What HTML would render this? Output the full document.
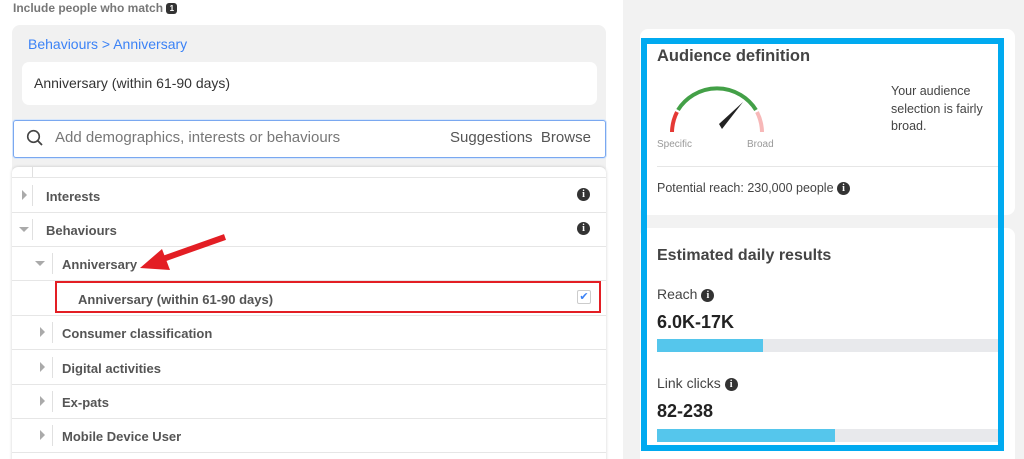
<!DOCTYPE html>
<html><head><style>
*{box-sizing:border-box;margin:0;padding:0}
html,body{width:1024px;height:459px;overflow:hidden}
body{background:#fff;font-family:"Liberation Sans",Arial,sans-serif;position:relative;color:#444}
.abs{position:absolute}
.info{display:inline-block;width:13px;height:13px;border-radius:50%;background:#333;color:#fff;font-size:10px;font-weight:bold;text-align:center;line-height:13px;font-family:"Liberation Serif",serif;vertical-align:middle}
.row{position:absolute;left:12px;width:594px;height:35px;border-bottom:1px solid #e6e6e6;font-size:13px;font-weight:bold;color:#555}
.row .t{position:absolute;top:11px}
.row .sep{position:absolute;top:7px;width:1px;height:21px;background:#e0e0e0}
.tri-r{position:absolute;top:12px;width:0;height:0;border-top:5px solid transparent;border-bottom:5px solid transparent;border-left:5px solid #aaa}
.tri-d{position:absolute;top:15px;width:0;height:0;border-left:5px solid transparent;border-right:5px solid transparent;border-top:5px solid #aaa}
</style></head><body>
<div class="abs" style="left:13px;top:1px;font-size:12px;font-weight:bold;color:#777">Include people who match <span class="info" style="border-radius:3px;width:11px;height:11px;line-height:11px;font-size:8px;font-family:'Liberation Sans'">1</span></div>
<div class="abs" style="left:12px;top:25px;width:594px;height:150px;background:#f1f1f1;border-radius:8px"></div>
<div class="abs" style="left:28px;top:36px;font-size:14px;color:#3b82f6">Behaviours &gt; Anniversary</div>
<div class="abs" style="left:22px;top:62px;width:575px;height:43px;background:#fff;border-radius:7px;font-size:14px;color:#333;padding:13px 12px">Anniversary (within 61-90 days)</div>
<div class="abs" style="left:13px;top:120px;width:593px;height:38px;background:#fff;border:1px solid #7aa8f0;border-radius:3px;box-shadow:0 0 0 1px #d6e6fb"></div>
<svg class="abs" style="left:26px;top:129px" width="18" height="18"><circle cx="7.5" cy="7.5" r="5.8" fill="none" stroke="#444" stroke-width="1.6"/><line x1="11.8" y1="11.8" x2="16" y2="16" stroke="#444" stroke-width="1.8"/></svg>
<div class="abs" style="left:55px;top:129px;font-size:15px;color:#777">Add demographics, interests or behaviours</div>
<div class="abs" style="left:450px;top:129px;font-size:15px;color:#555">Suggestions&nbsp;&nbsp;Browse</div>
<div class="abs" style="left:12px;top:167px;width:594px;height:300px;background:#fff;border-radius:6px;box-shadow:0 0 3px rgba(0,0,0,.18)"></div>
<div class="row" style="top:167px;height:11px"><div class="sep" style="left:20px;top:0;height:10px"></div></div>
<div class="row" style="top:178px"><div class="tri-r" style="left:10px"></div><div class="sep" style="left:20px"></div><div class="t" style="left:34px">Interests</div><span class="info" style="position:absolute;right:16px;top:10px">i</span></div>
<div class="row" style="top:212px"><div class="tri-d" style="left:7px"></div><div class="sep" style="left:20px"></div><div class="t" style="left:34px">Behaviours</div><span class="info" style="position:absolute;right:16px;top:10px">i</span></div>
<div class="row" style="top:246px"><div class="tri-d" style="left:23px"></div><div class="sep" style="left:40px"></div><div class="t" style="left:50px">Anniversary</div></div>
<div class="row" style="top:281px"><div class="t" style="left:66px">Anniversary (within 61-90 days)</div></div>
<div class="abs" style="left:55px;top:281px;width:546px;height:32px;border:2px solid #e31e24"></div>
<div class="abs" style="left:577px;top:290px;width:14px;height:14px;border:1px solid #ccc;border-radius:2px;color:#3b82f6;font-size:11px;line-height:12px;text-align:center">✔</div>
<div class="row" style="top:315px"><div class="tri-r" style="left:28px"></div><div class="sep" style="left:40px"></div><div class="t" style="left:50px">Consumer classification</div></div>
<div class="row" style="top:350px"><div class="tri-r" style="left:28px"></div><div class="sep" style="left:40px"></div><div class="t" style="left:50px">Digital activities</div></div>
<div class="row" style="top:384px"><div class="tri-r" style="left:28px"></div><div class="sep" style="left:40px"></div><div class="t" style="left:50px">Ex-pats</div></div>
<div class="row" style="top:418px"><div class="tri-r" style="left:28px"></div><div class="sep" style="left:40px"></div><div class="t" style="left:50px">Mobile Device User</div></div>
<svg class="abs" style="left:130px;top:230px" width="100" height="45"><line x1="95" y1="7" x2="30" y2="30" stroke="#e31e24" stroke-width="6"/><polygon points="10,38 32,19 40,40" fill="#e31e24"/></svg>

<div class="abs" style="left:623px;top:0;width:401px;height:459px;background:#f2f2f2"></div>
<div class="abs" style="left:640px;top:29px;width:375px;height:186px;background:#fff;border-radius:8px"></div>
<div class="abs" style="left:640px;top:228px;width:375px;height:240px;background:#fff;border-radius:8px"></div>
<div class="abs" style="left:641px;top:38px;width:363px;height:413px;border:6px solid #00aaf0"></div>
<div class="abs" style="left:657px;top:47px;font-size:16.5px;font-weight:bold;color:#444">Audience definition</div>
<svg class="abs" style="left:660px;top:80px" width="120" height="55">
<path d="M12 52 A46 46 0 0 1 17 32" fill="none" stroke="#e53935" stroke-width="4"/>
<path d="M18 30 A46 46 0 0 1 96 30" fill="none" stroke="#43a047" stroke-width="4"/>
<path d="M97 32 A46 46 0 0 1 102 52" fill="none" stroke="#f7b8b8" stroke-width="4"/>
<path d="M59 44 L83 22 L62 49 Z" fill="#222"/></svg>
<div class="abs" style="left:657px;top:139px;font-size:10px;color:#999">Specific</div>
<div class="abs" style="left:747px;top:139px;font-size:10px;color:#999">Broad</div>
<div class="abs" style="left:891px;top:83px;font-size:12.5px;color:#444;line-height:17.5px;width:112px">Your audience selection is fairly broad.</div>
<div class="abs" style="left:657px;top:166px;width:341px;height:1px;background:#e6e6e6"></div>
<div class="abs" style="left:657px;top:181px;font-size:12.5px;color:#444">Potential reach: 230,000 people <span class="info">i</span></div>
<div class="abs" style="left:657px;top:247px;font-size:16px;font-weight:bold;color:#444">Estimated daily results</div>
<div class="abs" style="left:657px;top:286px;font-size:14px;color:#444">Reach <span class="info">i</span></div>
<div class="abs" style="left:657px;top:312px;font-size:18px;font-weight:bold;color:#222">6.0K-17K</div>
<div class="abs" style="left:657px;top:339px;width:341px;height:13px;background:#e8e9ec"><div style="width:106px;height:13px;background:#55c6ec"></div></div>
<div class="abs" style="left:657px;top:375px;font-size:14px;color:#444">Link clicks <span class="info">i</span></div>
<div class="abs" style="left:657px;top:401px;font-size:18px;font-weight:bold;color:#222">82-238</div>
<div class="abs" style="left:657px;top:429px;width:341px;height:13px;background:#e8e9ec"><div style="width:178px;height:13px;background:#55c6ec"></div></div>
</body></html>
